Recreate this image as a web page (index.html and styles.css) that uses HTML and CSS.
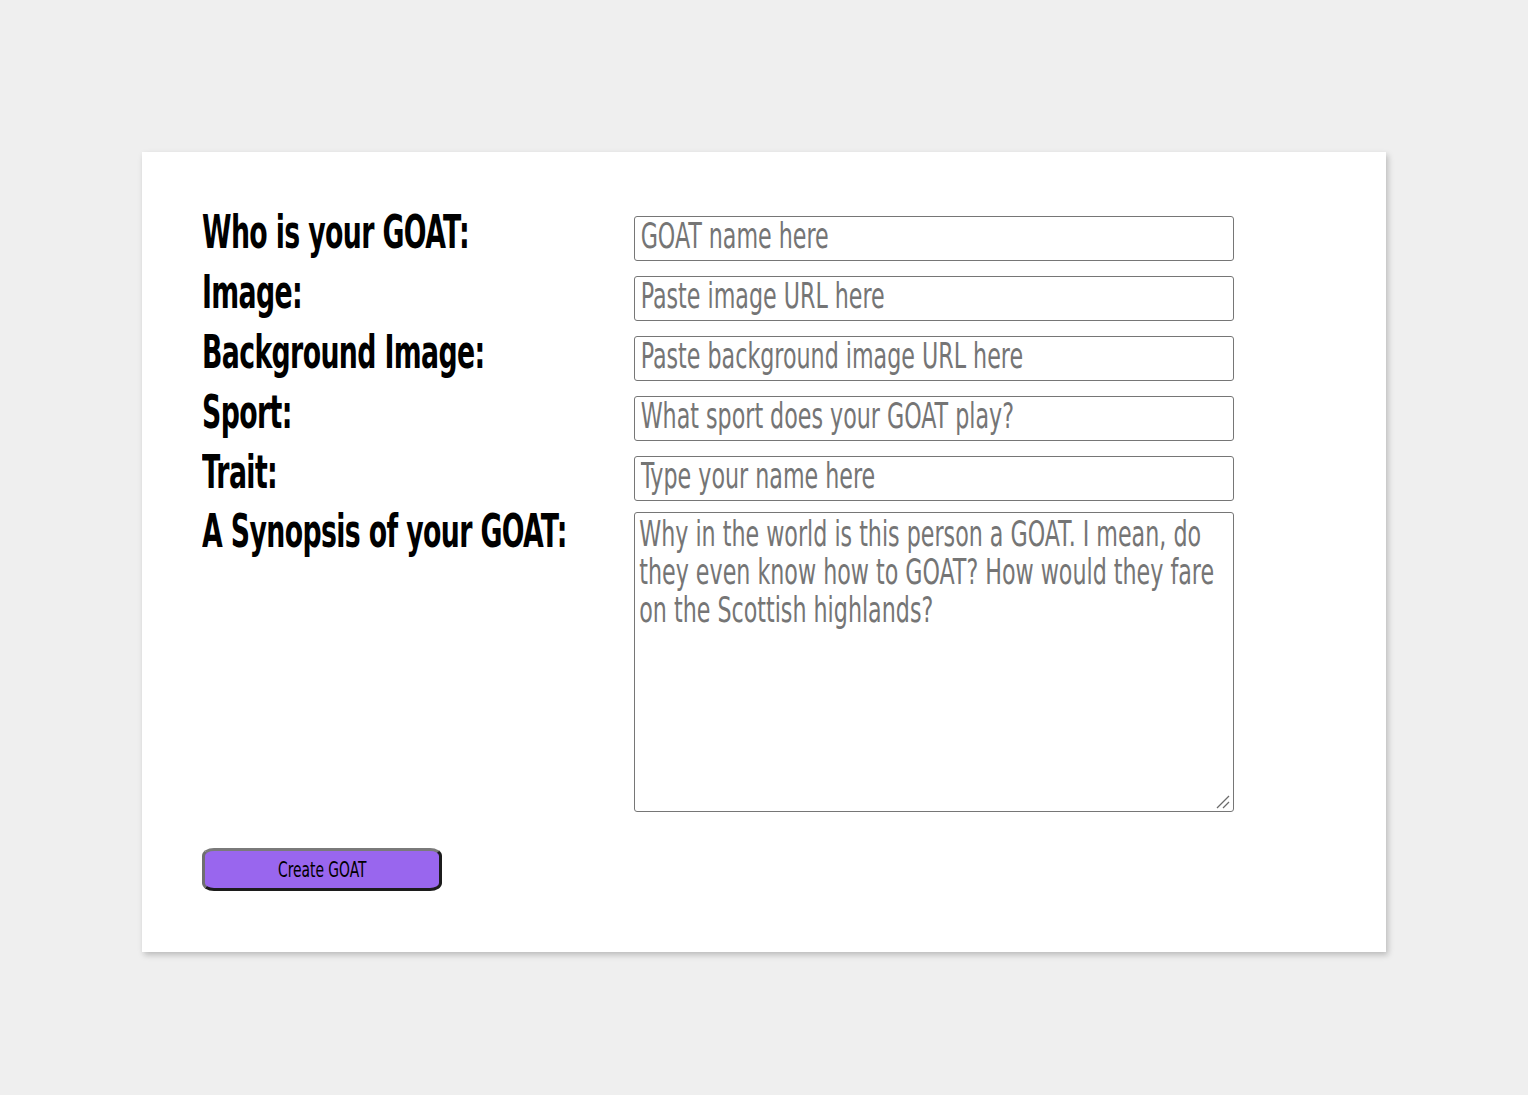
FILE: index.html
```html
<!DOCTYPE html>
<html lang="en">
<head>
<meta charset="utf-8">
<title>Create GOAT</title>
<link rel="stylesheet" href="styles.css">
</head>
<body>
<main class="card">
  <form class="goat-form">
    <div class="fields">
      <label class="label" for="name"><span class="label-text">Who is your GOAT:</span></label>
      <div class="field-box"><input class="field" id="name" type="text" placeholder="GOAT name here"></div>
      <label class="label" for="image"><span class="label-text">Image:</span></label>
      <div class="field-box"><input class="field" id="image" type="text" placeholder="Paste image URL here"></div>
      <label class="label" for="bg"><span class="label-text">Background Image:</span></label>
      <div class="field-box"><input class="field" id="bg" type="text" placeholder="Paste background image URL here"></div>
      <label class="label" for="sport"><span class="label-text">Sport:</span></label>
      <div class="field-box"><input class="field" id="sport" type="text" placeholder="What sport does your GOAT play?"></div>
      <label class="label" for="trait"><span class="label-text">Trait:</span></label>
      <div class="field-box"><input class="field" id="trait" type="text" placeholder="Type your name here"></div>
      <label class="label label-synopsis" for="synopsis"><span class="label-text">A Synopsis of your GOAT:</span></label>
      <div class="field-box area-box">
        <textarea class="field area" id="synopsis" placeholder="Why in the world is this person a GOAT. I mean, do they even know how to GOAT? How would they fare on the Scottish highlands?"></textarea>
        <svg class="grip" width="14" height="14" viewBox="0 0 14 14" aria-hidden="true">
          <path d="M1 13 L13 1" stroke="#6b6b6b" stroke-width="1.3" fill="none"/>
          <path d="M7 13 L13 7" stroke="#6b6b6b" stroke-width="1.3" fill="none"/>
        </svg>
      </div>
    </div>
    <button class="create" type="button"><span class="create-text">Create GOAT</span></button>
  </form>
</main>
</body>
</html>
```
FILE: styles.css
```css
html, body {
  margin: 0;
  padding: 0;
  background: #efefef;
}

body {
  font-family: "DejaVu Sans Condensed", "DejaVu Sans", sans-serif;
}

.card {
  box-sizing: border-box;
  width: 1244px;
  height: 800px;
  margin: 152px auto 143px;
  padding: 60px;
  background: #ffffff;
  box-shadow: 2px 3px 6px rgba(0, 0, 0, 0.22);
}

.goat-form {
  display: flex;
  flex-direction: column;
  align-items: flex-start;
}

.fields {
  display: grid;
  grid-template-columns: 432px 600px;
  row-gap: 15px;
  padding-top: 4px;
}

.label {
  height: 45px;
  display: flex;
  align-items: flex-start;
  overflow: visible;
  white-space: nowrap;
}

.label-text {
  display: inline-block;
  margin-top: -4px;
  font-weight: bold;
  font-size: 47px;
  line-height: 40px;
  letter-spacing: -1px;
  color: #000;
  transform: scaleX(0.633);
  transform-origin: left top;
}

.label-synopsis {
  margin-top: -1px;
}

.field-box {
  box-sizing: border-box;
  position: relative;
  width: 600px;
  height: 45px;
  border: 1px solid #767676;
  border-radius: 3px;
  background: #fff;
  overflow: hidden;
}

.field {
  box-sizing: border-box;
  display: block;
  width: 848px;
  height: 43px;
  margin: 0;
  padding: 0 8px 5px;
  border: none;
  outline: none;
  background: transparent;
  font-family: inherit;
  font-size: 35px;
  color: #333;
  transform: scaleX(0.705);
  transform-origin: left top;
}

.field::placeholder {
  color: #757575;
}

.area-box {
  height: 300px;
  margin-top: -4px;
}

.area {
  height: 298px;
  padding: 2px 8px 0 6px;
  line-height: 38px;
  resize: none;
}

.grip {
  position: absolute;
  right: 3px;
  bottom: 2px;
}

.create {
  margin-top: 36px;
  width: 240px;
  height: 43px;
  background: #9966ee;
  border-style: solid;
  border-width: 3px;
  border-color: #7a7a7a #1c1c1c #1c1c1c #6f6f6f;
  border-radius: 12px / 8px;
  font-family: inherit;
  color: #000;
  padding: 0;
  display: flex;
  justify-content: center;
  align-items: center;
}

.create-text {
  display: inline-block;
  font-size: 22px;
  transform: scaleX(0.7);
  white-space: nowrap;
}
```
